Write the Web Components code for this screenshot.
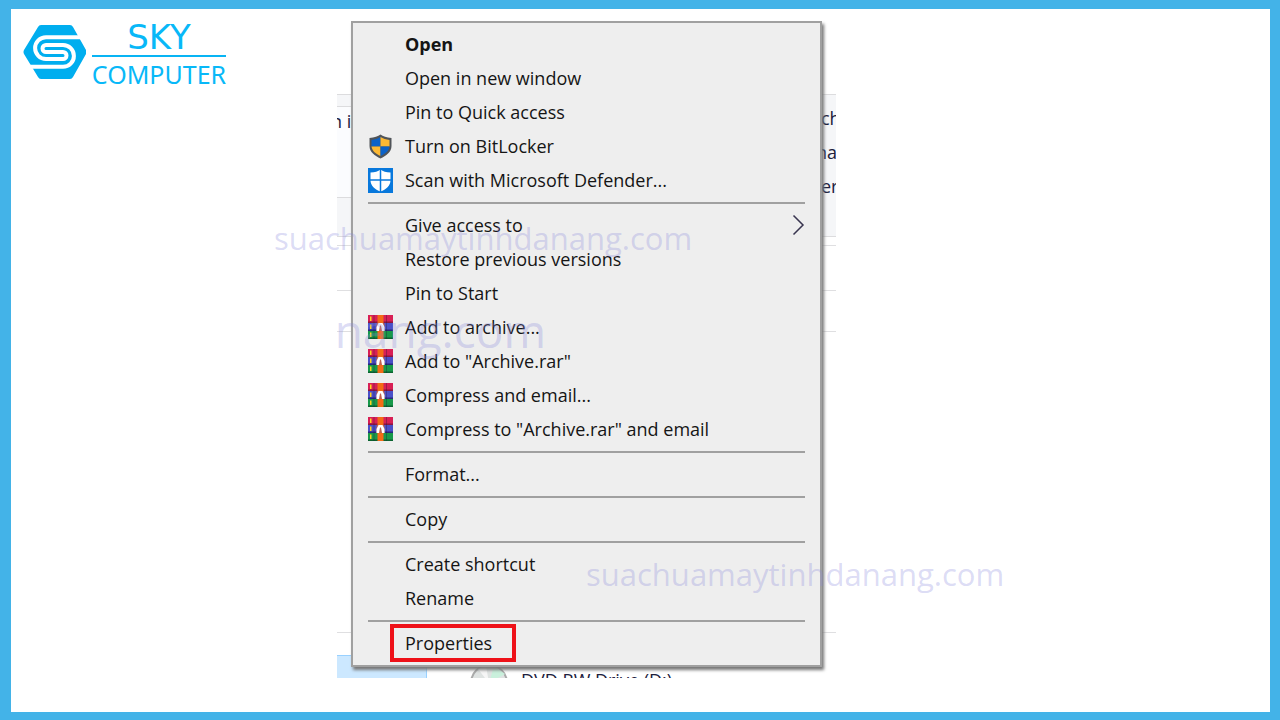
<!DOCTYPE html>
<html lang="en">
<head>
<meta charset="utf-8">
<title>Sky Computer</title>
<style>
html, body { height: 100%; margin: 0; }
body { font-family: "Open Sans", "Noto Sans", sans-serif; background: #fff; }
</style>
</head>
<body>
<sky-frame>
  <sky-logo slot="logo"></sky-logo>
  <desktop-capture>
    <context-menu>
      <menu-item bold>Open</menu-item>
      <menu-item>Open in new window</menu-item>
      <menu-item>Pin to Quick access</menu-item>
      <menu-item icon="shield">Turn on BitLocker</menu-item>
      <menu-item icon="defender">Scan with Microsoft Defender...</menu-item>
      <menu-separator></menu-separator>
      <menu-item submenu>Give access to</menu-item>
      <menu-item>Restore previous versions</menu-item>
      <menu-item>Pin to Start</menu-item>
      <menu-item icon="rar">Add to archive...</menu-item>
      <menu-item icon="rar">Add to "Archive.rar"</menu-item>
      <menu-item icon="rar">Compress and email...</menu-item>
      <menu-item icon="rar">Compress to "Archive.rar" and email</menu-item>
      <menu-separator></menu-separator>
      <menu-item>Format...</menu-item>
      <menu-separator></menu-separator>
      <menu-item>Copy</menu-item>
      <menu-separator></menu-separator>
      <menu-item>Create shortcut</menu-item>
      <menu-item>Rename</menu-item>
      <menu-separator></menu-separator>
      <menu-item marked>Properties</menu-item>
    </context-menu>
  </desktop-capture>
  <water-mark slot="marks" style="--x:263px;--y:207px">suachuamaytinhdanang.com</water-mark>
  <water-mark slot="marks" style="--x:575px;--y:543px">suachuamaytinhdanang.com</water-mark>
</sky-frame>
<script>
function define(name, html, setup) {
  const template = document.createElement('template');
  template.innerHTML = html;
  customElements.define(name, class extends HTMLElement {
    constructor() {
      super();
      this.attachShadow({ mode: 'open' }).append(template.content.cloneNode(true));
    }
    connectedCallback() { if (setup) setup(this, this.shadowRoot); }
  });
}

define('sky-frame', `
<style>
:host { display: grid; grid-template-columns: 326px minmax(0, 499px) 1fr; align-items: start;
  box-sizing: border-box; min-height: 100%; position: relative; overflow: hidden;
  border: solid #43b3e8; border-width: 9px 10px 8px 11px; }
</style>
<slot name="logo"></slot><slot></slot><slot name="marks"></slot>`);

define('sky-logo', `
<style>
:host { display: flex; gap: 5px; padding: 11px 0 0 11px; color: #08b8f8; }
svg { width: 64px; height: 64px; flex: none; }
.name { width: 136px; display: flex; flex-direction: column; align-items: center; white-space: nowrap; }
.top { font: 34px/34px "DejaVu Sans", sans-serif; border-bottom: 2px solid #08b4f4; width: 134px; text-align: center; padding-bottom: 1px; }
.bottom { font: 25px/34px "Noto Sans", sans-serif; }
</style>
<svg viewBox="22 20 64 64" aria-hidden="true">
  <path d="M41 25H70Q72 25 73 27L86 50Q87 52 86 54L73 77Q72 79 70 79H41Q39 79 38 77L24 54Q23 52 24 50L38 27Q39 25 41 25Z" fill="#00aeef"/>
  <path d="M81 37.200H46A10.900 10.900 0 0 0 46 59H63A3.500 3.500 0 0 0 63 52H46A3.500 3.500 0 0 1 46 45H63A10.900 10.900 0 0 1 63 66.800H29" fill="none" stroke="#fff" stroke-width="4"/>
</svg>
<div class="name"><span class="top">SKY</span><span class="bottom">COMPUTER</span></div>`);

define('desktop-capture', `
<style>
:host { display: block; position: relative; overflow: hidden; padding: 12px 14px 11px; color: #20203c; font-size: 18px; }
.back { position: absolute; inset: 0; line-height: 34px; }
.back > * { position: absolute; box-sizing: border-box; white-space: nowrap; }
.ribbon { top: 85px; left: 0; right: 0; height: 143px; background: #f5f6f8; border: solid #dcdcde; border-width: 1px 0; }
.group { top: 97px; left: 0; width: 40px; height: 92px; background: #fbfcfe; border: solid #dcdcde; border-width: 1px 0; text-indent: -6px; line-height: 28px; }
.words { top: 92px; right: 0; width: 14px; overflow: hidden; }
.words div { text-indent: -1px; }
.words .na { text-indent: -6px; }
.line { left: 0; right: 0; height: 1px; background: #dfdfe1; }
.selected { left: 0; bottom: 0; width: 90px; height: 23px; background: #cce8ff; border: solid #99d1ff; border-width: 1px 1px 0 0; }
.disc { left: 133px; bottom: -24px; }
.drive { left: 184px; bottom: -19px; }
.big { right: 290px; top: 291px; font-size: 46px; line-height: 60px; color: rgba(136, 136, 220, .3); z-index: 2; }
</style>
<div class="back">
  <div class="ribbon"></div>
  <div class="group">n i</div>
  <div class="words"><div>ch</div><div class="na">na</div><div>er</div></div>
  <div class="line" style="top:236px"></div>
  <div class="line" style="top:281px"></div>
  <div class="line" style="top:322px"></div>
  <div class="line" style="top:623px"></div>
  <div class="selected"></div>
  <svg class="disc" width="38" height="38" viewBox="0 0 38 38" aria-hidden="true"><circle cx="19" cy="19" r="18" fill="#dfe3e2" stroke="#aaa" stroke-width="2"/><path d="M19 19L24 2L35 10Z" fill="#c9f0dc"/><path d="M19 19L8 5L16 2Z" fill="#f6f6f6"/></svg>
  <div class="drive">DVD RW Drive (D:)</div>
</div>
<slot></slot>
<div class="back" style="pointer-events:none"><span class="big">nang.com</span></div>`);

define('context-menu', `
<style>
:host { display: block; position: relative; box-sizing: border-box; background: #eee; border: 2px solid #a0a0a0; padding: 4px 15px 5px; color: #151515; box-shadow: 2px 3px 3px #777; }
</style>
<div role="menu"><slot></slot></div>`);

define('menu-separator', `
<style>
:host { display: block; padding: 5px 0 4px; }
hr { margin: 0; border: 0; height: 2px; background: #a0a0a0; }
</style>
<hr>`);

define('menu-item', `
<style>
:host { display: block; }
button { all: unset; box-sizing: border-box; display: grid; grid-template-columns: 37px 1fr auto; align-items: center;
  width: 100%; height: 34px; font-size: 18px; line-height: 34px; white-space: nowrap; }
:host([bold]) button { font-weight: 700; }
svg { display: block; }
.label { position: relative; justify-self: start; }
:host([marked]) .label::after { content: ""; position: absolute; inset: -2px -24px -2px -15px; border: 4px solid #ee1118; }
</style>
<button type="button" role="menuitem"><span class="icon"></span><span class="label"><slot></slot></span><span class="arrow"></span></button>`,
(host, root) => {
  const icons = {
    shield: '<svg width="25" height="25" viewBox="0 0 25 25"><path d="M12.500 .5C15 2.500 18.500 3.500 23.500 4V12C23.500 18 18 22 12.500 24.500C7 22 1.500 18 1.500 12V4C6.500 3.500 10 2.500 12.500 .5Z" fill="#505459"/><path d="M12.500 3V12.500H3.500V6C7 5.500 10 4.500 12.500 3Z" fill="#0b62c8"/><path d="M12.500 3C15 4.500 18 5.500 21.500 6V12.500H12.500Z" fill="#fdb934"/><path d="M3.500 12.500H12.500V22C8 20 4 17 3.500 12.500Z" fill="#fdb934"/><path d="M12.500 12.500H21.500C21 17 17 20 12.500 22Z" fill="#0b62c8"/></svg>',
    defender: '<svg width="25" height="25" viewBox="0 0 25 25"><path d="M0 0H25V25H0Z" fill="#0878dc"/><path d="M12.500 1.500C15 3.500 18 4.500 22.500 4.500V12C22.500 18 18 21.500 12.500 23.500C7 21.500 2.500 18 2.500 12V4.500C7 4.500 10 3.500 12.500 1.500Z" fill="#fff"/><path d="M12.500 1V24M2 12H23" stroke="#0878dc" stroke-width="1.500"/></svg>',
    rar: '<svg width="25" height="24" viewBox="0 0 25 24"><path d="M0 0H25V8H0Z" fill="#d81f55"/><path d="M0 6.500H25V8H0Z" fill="#8d1540"/><path d="M0 8H25V16H0Z" fill="#4a50c8"/><path d="M0 14.500H25V16H0Z" fill="#26287c"/><path d="M0 16H25V24H0Z" fill="#18994a"/><path d="M0 22.500H25V24H0Z" fill="#0b6330"/><path d="M6 0V24M18.500 0V24" stroke="#271b35" stroke-opacity=".35"/><path d="M2 1.500H3.500V6H2ZM2 9.500H3.500V14H2ZM2 17.500H3.500V22H2Z" fill="#ffd51f"/><path d="M9.500 0H15.500V24H9.500Z" fill="#f46b16"/><path d="M8.500 8.500H16.500V16H8.500Z" fill="#c0604c"/><path d="M8.500 16V12L10.500 8H14.500L16.500 12V16H14L13 10.500H12L11 16Z" fill="#fff"/></svg>'
  };
  root.querySelector('.icon').innerHTML = icons[host.getAttribute('icon')] || '';
  if (host.hasAttribute('submenu'))
    root.querySelector('.arrow').innerHTML = '<svg width="13" height="22" viewBox="0 0 13 22"><path d="M1.500 1.500L11 11L1.500 20.500" fill="none" stroke="#38344f" stroke-width="1.500"/></svg>';
});

define('water-mark', `
<style>
:host { position: absolute; left: var(--x); top: var(--y); font-size: 31px; line-height: 44px; color: rgba(136, 136, 220, .3); white-space: nowrap; pointer-events: none; }
</style>
<slot></slot>`);
</script>
</body>
</html>
